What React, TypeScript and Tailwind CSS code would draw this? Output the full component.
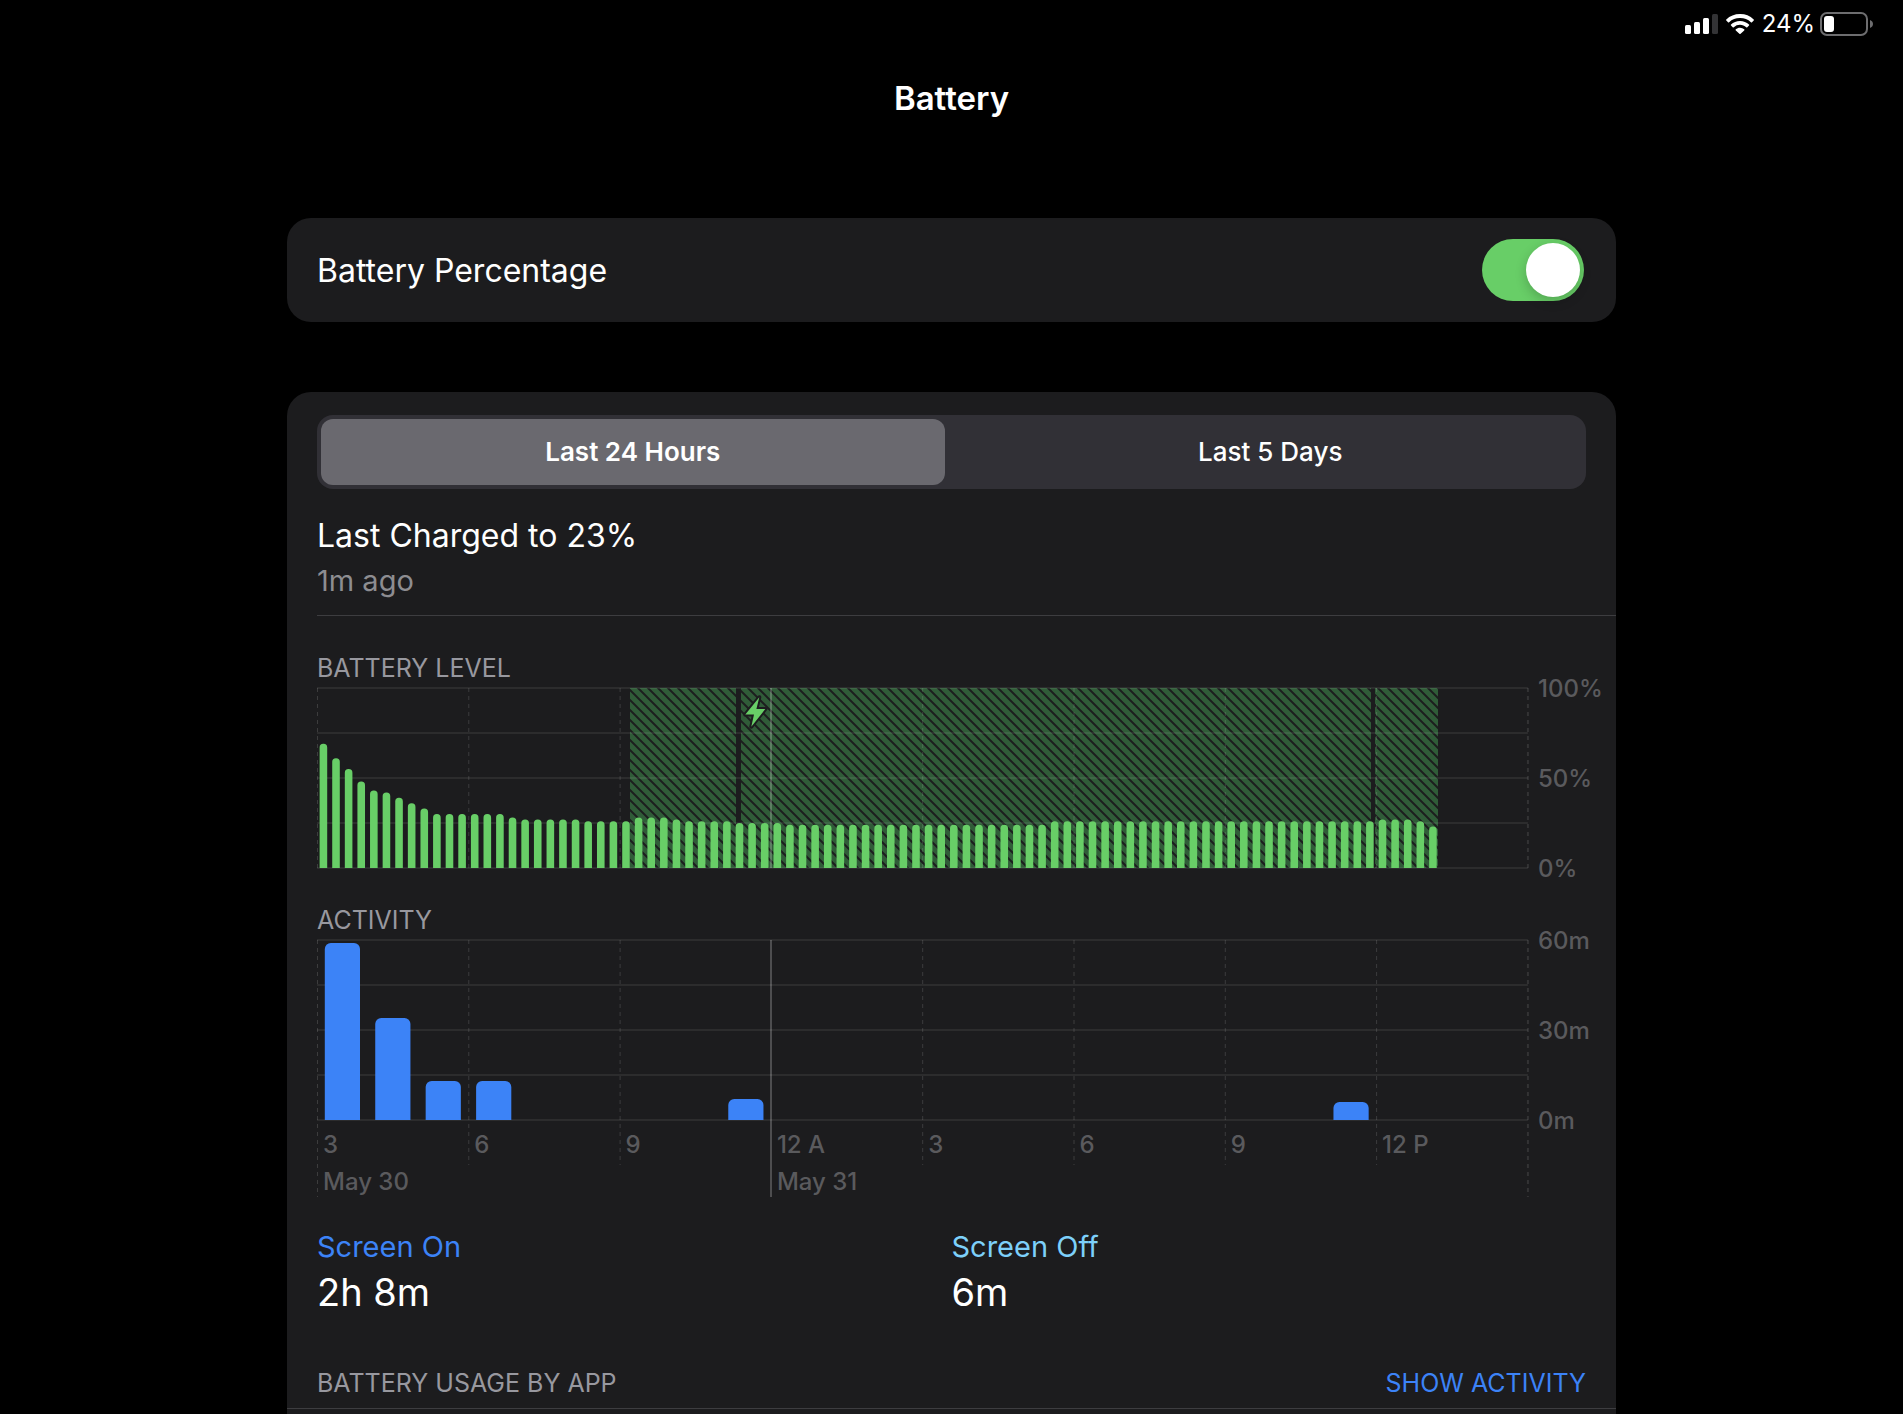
import { useState } from "react";
import { clsx } from "clsx";

// battery percent, one sample every 15 minutes
const levels = [
  69, 61, 55, 48, 43, 42, 39, 36, 33, 30, 30, 30, 30, 30, 30, 28, 27, 27, 27, 27,
  27, 26, 26, 26, 26, 28, 28, 28, 27, 26, 26, 26, 26, 25, 25, 25, 25,
  ...Array(21).fill(24),
  ...Array(26).fill(26),
  27, 27, 27, 26, 23,
];

// spans where the charger was connected, in chart units
const charging = [
  { from: 313, to: 419 },
  { from: 424, to: 1054 },
  { from: 1058, to: 1121 },
];

// minutes of use per hour
const activity = [
  { hour: 0, minutes: 59 },
  { hour: 1, minutes: 34 },
  { hour: 2, minutes: 13 },
  { hour: 3, minutes: 13 },
  { hour: 8, minutes: 7 },
  { hour: 20, minutes: 6 },
];

const hourLabels = ["3", "6", "9", "12 A", "3", "6", "9", "12 P"];

const tabs = ["Last 24 Hours", "Last 5 Days"];

const START = 0.5;
const STEP = 151.3;
const END = START + STEP * 8;
const BASE = 181;

function barPath(x: number, width: number, height: number, r: number) {
  const top = BASE - height;
  return `M${x} ${BASE}V${top + r}a${r} ${r} 0 0 1 ${r} ${-r}h${width - 2 * r}a${r} ${r} 0 0 1 ${r} ${r}V${BASE}Z`;
}

function Rows({ labels }: { labels: string[] }) {
  return (
    <>
      {[0, 1, 2, 3, 4].map((i) => (
        <line key={i} x1={0} x2={END} y1={1 + i * 45} y2={1 + i * 45} stroke="#fff" strokeOpacity={0.07} strokeWidth={2} />
      ))}
      {labels.map((label, i) => (
        <text key={label} x={1221} y={10 + i * 90} fill="#5a5a5d" fontSize={24} fontWeight={500}>
          {label}
        </text>
      ))}
    </>
  );
}

function Columns({ short, long }: { short: number; long: number }) {
  return (
    <>
      {Array.from({ length: 9 }, (_, i) => {
        const x = START + i * STEP;
        if (i === 3) {
          return <line key={i} x1={454} x2={454} y1={1} y2={long} stroke="#fff" strokeOpacity={0.22} strokeWidth={2} />;
        }
        return (
          <line
            key={i}
            x1={x}
            x2={x}
            y1={1}
            y2={i === 0 || i === 8 ? long : short}
            stroke="#fff"
            strokeOpacity={i === 8 ? 0.1 : 0.14}
            strokeWidth={i === 8 ? 2 : 1}
            strokeDasharray="4 4"
          />
        );
      })}
    </>
  );
}

function BatteryLevelChart() {
  return (
    <svg viewBox="0 0 1299 182" className="block w-full overflow-visible" role="img" aria-label="Battery level">
      <defs>
        <pattern id="hatch" width="10" height="10" patternUnits="userSpaceOnUse">
          <rect width="10" height="10" fill="#305c38" />
          <path d="M-5 -5L15 15M-5 5L5 15M5 -5L15 5" stroke="#1c1e1e" strokeWidth="2" />
        </pattern>
      </defs>
      {charging.map(({ from, to }) => (
        <rect key={from} x={from} y={1} width={to - from} height={180} fill="url(#hatch)" />
      ))}
      <Rows labels={["100%", "50%", "0%"]} />
      <Columns short={BASE} long={BASE} />
      {levels.map((level, i) => (
        <path key={i} d={barPath(2.6 + (i * STEP) / 12, 7.6, level * 1.8, 3.7)} fill="#68ce67" />
      ))}
      <path
        d="M442.3 10.3L428.3 27.6H437L434.3 39.7L448.3 22H439.4Z"
        fill="#68ce67"
        stroke="#1c1c1e"
        strokeWidth="4"
        strokeLinejoin="round"
        paintOrder="stroke"
      />
    </svg>
  );
}

function ActivityChart() {
  return (
    <svg viewBox="0 0 1299 258" className="block w-full overflow-visible" role="img" aria-label="Activity">
      <Rows labels={["60m", "30m", "0m"]} />
      <Columns short={226} long={258} />
      {activity.map(({ hour, minutes }) => (
        <path key={hour} d={barPath(7.8 + (hour * STEP) / 3, 35.2, minutes * 3, 6)} fill="#3c83f7" />
      ))}
      <g fill="#5a5a5d" fontSize={24} fontWeight={500}>
        {hourLabels.map((label, i) => (
          <text key={i} x={6 + i * STEP} y={214}>
            {label}
          </text>
        ))}
        <text x={6} y={251}>May 30</text>
        <text x={6 + 3 * STEP} y={251}>May 31</text>
      </g>
    </svg>
  );
}

function StatusBar() {
  return (
    <div className="flex h-12 items-center justify-end pr-[29px]">
      <svg width="34" height="20" viewBox="0 0 34 20" className="mr-[7px]" aria-label="Signal">
        <rect x="0" y="11" width="6" height="9" rx="1.5" fill="#fff" />
        <rect x="9" y="8" width="6" height="12" rx="1.5" fill="#fff" />
        <rect x="18" y="4" width="6" height="16" rx="1.5" fill="#fff" />
        <rect x="27" y="0" width="6" height="20" rx="1.5" fill="#333335" />
      </svg>
      <svg width="28" height="20" viewBox="0 0 28 20" className="mr-2" fill="#fff" aria-label="Wi-Fi">
        <path d="M14 0C8.700 0 3.900 2 .3 5.400a.8.800 0 0 0 0 1.100L2 8.200a.8.800 0 0 0 1.100 0A15.800 15.800 0 0 1 14 4a15.800 15.800 0 0 1 10.900 4.200.8.800 0 0 0 1.100 0l1.700-1.700a.8.800 0 0 0 0-1.100A19.800 19.800 0 0 0 14 0Z" />
        <path d="M14 6.900c-3.500 0-6.600 1.300-9 3.500a.8.800 0 0 0 0 1.100l1.700 1.700a.8.800 0 0 0 1.100 0A9.200 9.200 0 0 1 14 10.800c2.400 0 4.500.9 6.200 2.400a.8.800 0 0 0 1.100 0l1.700-1.700a.8.800 0 0 0 0-1.100 13.300 13.300 0 0 0-9-3.500Z" />
        <path d="M14 13.700c-1.600 0-3.100.6-4.200 1.600a.8.800 0 0 0 0 1.100l3.600 3.300a.9.900 0 0 0 1.200 0l3.600-3.300a.8.800 0 0 0 0-1.100 6.300 6.300 0 0 0-4.200-1.600Z" />
      </svg>
      <span className="mr-[5px] text-2xl">24%</span>
      <svg width="54" height="24" viewBox="0 0 54 24" aria-label="Battery">
        <rect x="1" y="1" width="46" height="22" rx="6" fill="none" stroke="#6d6d6f" strokeWidth="2" />
        <rect x="4" y="4" width="10" height="16" rx="3" fill="#fff" />
        <path d="M50 8c1.800.7 3 2.200 3 4s-1.200 3.300-3 4Z" fill="#6d6d6f" />
      </svg>
    </div>
  );
}

function Caption({ children }: { children: string }) {
  return <h2 className="text-[25px] leading-8 text-[#98989f]">{children}</h2>;
}

export default function App() {
  const [showPercentage, setShowPercentage] = useState(true);
  const [tab, setTab] = useState(0);

  return (
    <div className="flex min-h-screen flex-col bg-black font-['Inter','Liberation_Sans',sans-serif] text-white">
      <StatusBar />
      <h1 className="mt-[30px] text-center text-[33px] leading-10 font-semibold">Battery</h1>

      <main className="mx-auto mt-[100px] flex w-full max-w-[1329px] flex-1 flex-col">
        <label className="flex h-[104px] items-center justify-between rounded-3xl bg-[#1c1c1e] pr-8 pl-[30px] text-[32px] leading-10">
          <span className="pt-0.5">Battery Percentage</span>
          <input
            type="checkbox"
            role="switch"
            checked={showPercentage}
            onChange={(e) => setShowPercentage(e.target.checked)}
            className="flex h-[62px] w-[102px] cursor-pointer appearance-none rounded-full bg-[#39393d] p-1 before:size-[54px] before:rounded-full before:bg-white before:shadow-[0_4px_12px_rgba(0,0,0,0.2)] checked:justify-end checked:bg-[#68ce67]"
          />
        </label>

        <section className="mt-[70px] flex-1 rounded-t-3xl bg-[#1c1c1e] pt-[23px]">
          <div className="mx-[30px] flex h-[74px] gap-[14px] rounded-2xl bg-[#313036] p-1" role="tablist">
            {tabs.map((name, i) => (
              <button
                key={name}
                type="button"
                role="tab"
                aria-selected={tab === i}
                onClick={() => setTab(i)}
                className={clsx(
                  "flex-1 rounded-xl text-[26px] leading-8",
                  tab === i ? "bg-[#6a696f] font-semibold" : "font-medium"
                )}
              >
                {name}
              </button>
            ))}
          </div>

          <div className="ml-[30px]">
            <div className="border-b border-[#3d3d40] pt-[27px] pb-4">
              <p className="text-[32px] leading-10">Last Charged to 23%</p>
              <p className="mt-[7px] text-[29px] leading-9 text-[#8d8d91]">1m ago</p>
            </div>

            <div className="mt-9 flex flex-col gap-[3px]">
              <Caption>BATTERY LEVEL</Caption>
              <BatteryLevelChart />
            </div>

            <div className="mt-[35px] flex flex-col gap-[3px]">
              <Caption>ACTIVITY</Caption>
              <ActivityChart />
            </div>
          </div>

          <dl className="mx-[30px] mt-8 grid grid-cols-2">
            <div>
              <dt className="text-[29px] leading-9 text-[#3c83f7]">Screen On</dt>
              <dd className="mt-[3px] text-[38px] leading-12">2h 8m</dd>
            </div>
            <div>
              <dt className="text-[29px] leading-9 text-[#7dd0fa]">Screen Off</dt>
              <dd className="mt-[3px] text-[38px] leading-12">6m</dd>
            </div>
          </dl>

          <div className="mt-[51px] flex items-center justify-between border-b border-[#3d3d40] px-[30px] pb-[9px]">
            <Caption>BATTERY USAGE BY APP</Caption>
            <button type="button" className="text-[25px] leading-8 text-[#3c83f7]">
              SHOW ACTIVITY
            </button>
          </div>
        </section>
      </main>
    </div>
  );
}
